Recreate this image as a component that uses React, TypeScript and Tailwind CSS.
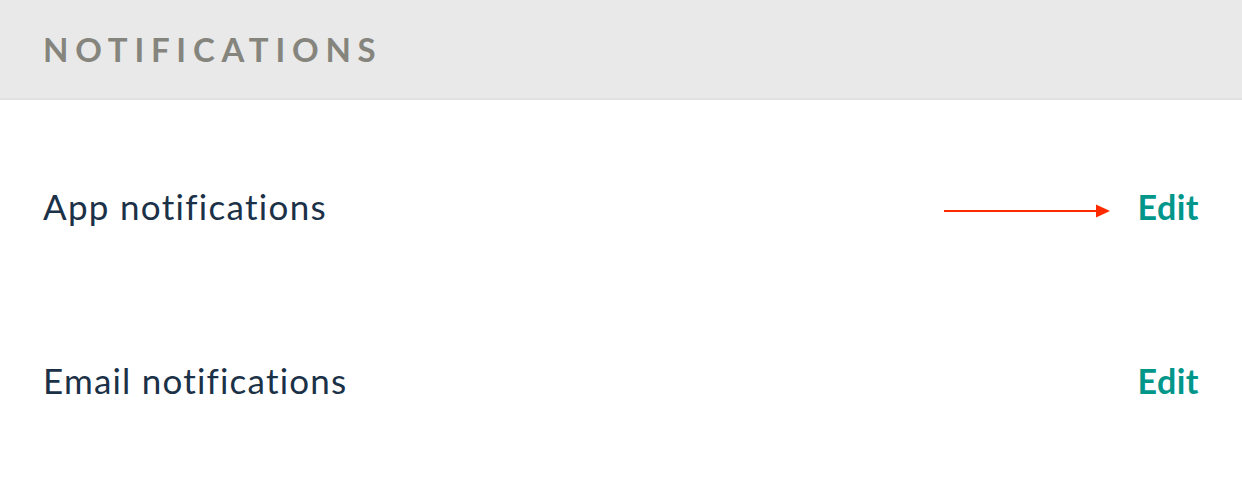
export default function App() {
  return (
    <div className="w-[1242px] h-[491px] bg-white" style={{ fontFamily: 'Lato, "Open Sans", sans-serif' }}>
      <div className="h-[100px] bg-[#e9e9e9] border-b-2 border-[#e2e2e0] flex items-center pl-[43px]">
        <span className="text-[33px] font-bold tracking-[0.205em] text-[#85857d] leading-none">NOTIFICATIONS</span>
      </div>
      <div className="flex flex-col">
        <div className="h-[212px] flex items-center justify-between pl-[43px] pr-[43px]">
          <span className="text-[35px] tracking-[1.3px] text-[#1b3147]">App notifications</span>
          <div className="flex items-center">
            <svg width="168" height="14" viewBox="0 0 168 14" className="mr-[25px] mt-[9px]">
              <line x1="0" y1="7" x2="154" y2="7" stroke="#ff2a00" strokeWidth="2" />
              <polygon points="152,0.5 166,7 152,13.5" fill="#ff2a00" />
            </svg>
            <span className="text-[34px] font-bold tracking-[0.5px] text-[#00968a]">Edit</span>
          </div>
        </div>
        <div className="h-[136px] flex items-center justify-between pl-[43px] pr-[43px]">
          <span className="text-[35px] tracking-[1.2px] text-[#1b3147]">Email notifications</span>
          <span className="text-[34px] font-bold tracking-[0.5px] text-[#00968a]">Edit</span>
        </div>
      </div>
    </div>
  );
}
